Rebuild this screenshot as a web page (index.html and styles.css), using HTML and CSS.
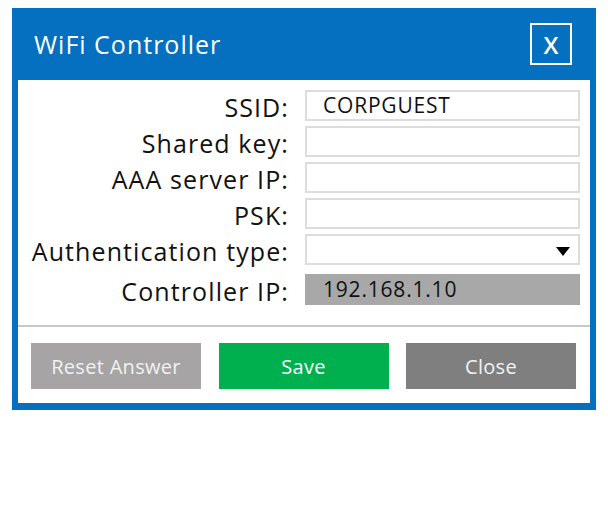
FILE: index.html
```html
<!DOCTYPE html>
<html>
<head>
<meta charset="utf-8">
<link rel="stylesheet" href="styles.css">
</head>
<body>
<div class="dialog">
  <div class="header">
    <span class="title">WiFi Controller</span>
    <span class="close-x">X</span>
  </div>
  <div class="body">
    <div class="form">
      <label>SSID:</label><div class="field">CORPGUEST</div>
      <label>Shared key:</label><div class="field"></div>
      <label>AAA server IP:</label><div class="field"></div>
      <label>PSK:</label><div class="field"></div>
      <label>Authentication type:</label><div class="field select"><span class="caret"></span></div>
      <label class="ctrl">Controller IP:</label><div class="field gray ctrl">192.168.1.10</div>
    </div>
    <div class="footer">
      <button class="btn reset">Reset Answer</button>
      <button class="btn save">Save</button>
      <button class="btn close">Close</button>
    </div>
  </div>
</div>
</body>
</html>
```
FILE: styles.css
```css
html, body { margin: 0; padding: 0; background: #fff; }
body { width: 608px; height: 520px; font-family: "Open Sans", "Noto Sans", sans-serif; }
.dialog {
  margin: 8px 0 0 12px;
  width: 584px;
  height: 402px;
  box-sizing: border-box;
  background: #0670c0;
  padding: 0 6px 7px 6px;
  display: flex;
  flex-direction: column;
}
.header {
  height: 72px;
  display: flex;
  align-items: center;
  justify-content: space-between;
  padding: 0 18px 0 16px;
  flex: none;
}
.title { color: #fff; font-size: 25px; letter-spacing: 1px; }
.close-x {
  width: 42px; height: 42px;
  box-sizing: border-box;
  border: 2px solid #fff;
  color: #fff;
  font-size: 24px;
  font-weight: 600;
  display: flex; align-items: center; justify-content: center;
}
.body {
  flex: 1;
  background: #fff;
  display: flex;
  flex-direction: column;
}
.form {
  display: grid;
  grid-template-columns: 271px 275px;
  column-gap: 16px;
  row-gap: 5px;
  padding: 10px 0 0 0;
  align-items: center;
}
label {
  text-align: right;
  font-size: 25px;
  color: #111;
  height: 31px;
  box-sizing: border-box;
  padding-top: 3px;
  line-height: 29px;
  letter-spacing: 1.1px;
}
.field {
  height: 31px;
  box-sizing: border-box;
  border: 2px solid #dcdcdc;
  font-size: 21px;
  line-height: 27px;
  padding-left: 16px;
  letter-spacing: 0.8px;
  color: #111;
  position: relative;
}
.ctrl { margin-top: 4px; }
.field.gray { background: #a8a8a8; border-color: #a8a8a8; }
.caret {
  position: absolute;
  right: 8px; top: 11px;
  width: 0; height: 0;
  border-left: 7px solid transparent;
  border-right: 7px solid transparent;
  border-top: 9px solid #000;
}
.footer {
  margin-top: 20px;
  border-top: 2px solid #c8c8c8;
  display: flex;
  justify-content: space-between;
  padding: 16px 14px 0 13px;
}
.btn {
  width: 170px;
  height: 46px;
  border: none;
  font-family: inherit;
  font-size: 20px;
  letter-spacing: 0.3px;
  color: #f2f2f2;
}
.reset { background: #a6a4a4; }
.save { background: #00b04f; color: #fff; }
.close { background: #7f7f7f; }
```
